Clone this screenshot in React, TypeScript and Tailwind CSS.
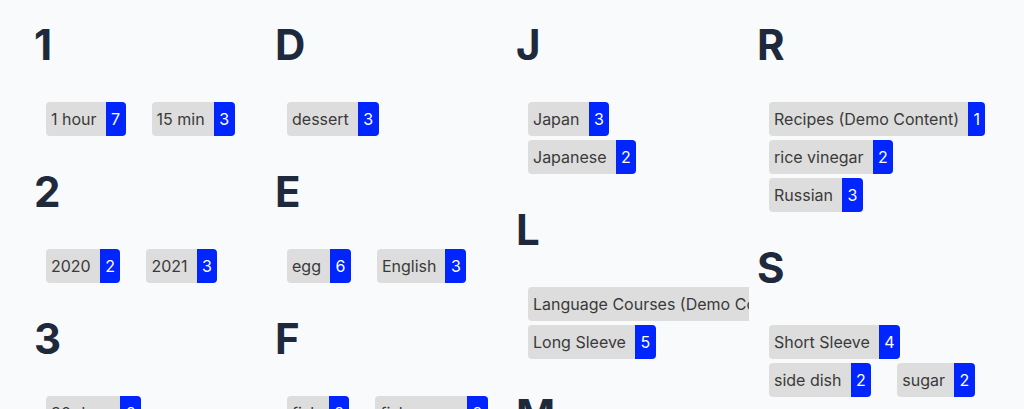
import React from "react";

type Tag = { label: string; count: number };
type Section = { letter: string; tags: Tag[] };

const columns: Section[][] = [
  [
    { letter: "1", tags: [{ label: "1 hour", count: 7 }, { label: "15 min", count: 3 }] },
    { letter: "2", tags: [{ label: "2020", count: 2 }, { label: "2021", count: 3 }] },
    { letter: "3", tags: [{ label: "30 days", count: 2 }] },
  ],
  [
    { letter: "D", tags: [{ label: "dessert", count: 3 }] },
    { letter: "E", tags: [{ label: "egg", count: 6 }, { label: "English", count: 3 }] },
    { letter: "F", tags: [{ label: "fish", count: 2 }, { label: "fish sauce", count: 2 }] },
  ],
  [
    { letter: "J", tags: [{ label: "Japan", count: 3 }, { label: "Japanese", count: 2 }] },
    { letter: "L", tags: [{ label: "Language Courses (Demo Content)", count: 1 }, { label: "Long Sleeve", count: 5 }] },
    { letter: "M", tags: [{ label: "main dish", count: 3 }] },
  ],
  [
    { letter: "R", tags: [{ label: "Recipes (Demo Content)", count: 1 }, { label: "rice vinegar", count: 2 }, { label: "Russian", count: 3 }] },
    { letter: "S", tags: [{ label: "Short Sleeve", count: 4 }, { label: "side dish", count: 2 }, { label: "sugar", count: 2 }] },
  ],
];

function TagPill({ tag }: { tag: Tag }) {
  return (
    <div className="mx-[13px] my-[2px] flex h-[34px] shrink-0 items-stretch overflow-hidden rounded-[4px] whitespace-nowrap">
      <span className="flex items-center bg-[#dddddd] pl-[5px] pr-[9px] text-[#3a3a3a]">{tag.label}</span>
      <span className="flex items-center bg-[#0025ff] px-[5.5px] text-white">{tag.count}</span>
    </div>
  );
}

export default function App() {
  return (
    <div
      className="h-[409px] w-[1024px] overflow-hidden bg-[#f9fafc] pl-[34px] pt-[24px]"
      style={{ fontFamily: "Inter, 'Noto Sans', sans-serif" }}
    >
      <div className="grid w-[958px] grid-cols-[232.5px_232.5px_232.5px_232.5px] gap-x-[8.5px]">
        {columns.map((col, ci) => (
          <div key={ci} className="flex flex-col gap-[33px] overflow-hidden">
            {col.map((sec) => (
              <div key={sec.letter} className="flex flex-col">
                <h2 className="mb-[34px] text-[42px] font-bold leading-[42px] text-[#1e293b]">{sec.letter}</h2>
                <div className="-mx-[1px] flex flex-wrap text-[16px] leading-[24px]">
                  {sec.tags.map((t) => (
                    <TagPill key={t.label} tag={t} />
                  ))}
                </div>
              </div>
            ))}
          </div>
        ))}
      </div>
    </div>
  );
}
